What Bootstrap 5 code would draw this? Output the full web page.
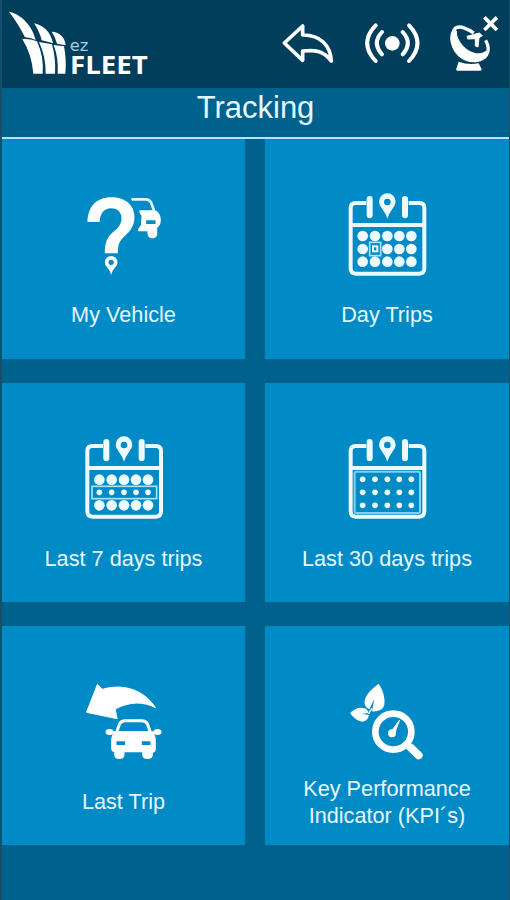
<!DOCTYPE html>
<html lang="en">
<head>
<meta charset="utf-8">
<meta name="viewport" content="width=device-width, initial-scale=1">
<title>ez FLEET - Tracking</title>
<link href="https://cdn.jsdelivr.net/npm/bootstrap@5.3.0/dist/css/bootstrap.min.css" rel="stylesheet">
<style>
body{background:#00618d;font-family:"Liberation Sans",Arial,sans-serif;color:#e6f8ff}
.screen{width:510px;height:900px;background:#00618d;border-left:2px solid #17506f;border-right:1px solid #17506f}
.topbar{height:88px;background:#003e5c;padding:0}
.title-bar{height:51px;border-bottom:2px solid #b9e3f5}
.title-bar h1{font-size:31px;line-height:40px;font-weight:400}
.tiles{display:grid;grid-template-columns:243px 244px;grid-template-rows:220px 219px 219px;column-gap:20px;row-gap:24px}
.tile{background:#008bc7;color:#e6f8ff;text-decoration:none;padding-top:46px}
.tile svg{width:100px;height:100px;flex:none}
.tile span{font-size:21.7px;line-height:27px;margin-top:16px;white-space:nowrap}
.tile .two-line{margin-top:1px}
.tile.low{padding-top:47px}
.tile.low .one-line{margin-top:15px}
.tile.last{padding-top:48px}
.tile.last .one-line{margin-top:14px}
svg{display:block}
</style>
<script src="https://cdn.jsdelivr.net/npm/bootstrap@5.3.0/dist/js/bootstrap.bundle.min.js"></script>
</head>
<body>
<main class="screen overflow-hidden">
<nav class="topbar navbar d-flex flex-nowrap justify-content-between align-items-start">
  <svg width="158" height="88" viewBox="6 0 474 264" fill="#fff" role="img" aria-label="ez FLEET">
    <path d="M27 35C62 42 97 76 107 120Q92 113 75 112Q53 68 27 35Z"/>
    <path d="M102 70C132 76 153 98 159 130Q145 126 125 121Q118 93 102 70Z"/>
    <path d="M155 95C177 96 195 110 197 136L171 131Q166 110 155 95Z"/>
    <path d="M67 117Q88 115 111 124Q132 170 128 221H100Q96 165 67 117Z"/>
    <path d="M117 126L156 133Q168 176 165 221H137Q138 170 117 126Z"/>
    <path d="M161 135L192 139Q200 180 196 221H173Q176 174 161 135Z"/>
    <text font-family="Open Sans" font-weight="700" font-size="74"><tspan x="209" y="152" font-family="DejaVu Sans" font-weight="400" font-size="46" fill="#a9cbdc" textLength="56" lengthAdjust="spacingAndGlyphs">ez</tspan><tspan x="210" y="221" textLength="233" lengthAdjust="spacingAndGlyphs">FLEET</tspan></text>
  </svg>
  <svg width="239" height="88" viewBox="0 0 717 264" fill="none" stroke="#fff" role="img" aria-label="Back, signal, satellite offline">
    <path d="M98 78V105C151 104 181 136 184 183C160 153 139 149 98 153V181L43 129Z" stroke-width="11" stroke-linejoin="round"/>
    <circle cx="367" cy="130" r="22" fill="#fff" stroke="none"/>
    <path d="M336 96Q305 129 336 163M398 96Q429 129 398 163M317 76Q266 129 317 183M417 76Q468 129 417 183" stroke-width="12" stroke-linecap="round"/>
    <path d="M553 88C534 121 555 165 590 178C614 187 640 180 650 164C658 151 655 136 647 121M553 88Q562 76 585 85Q600 90 611 99" stroke-width="10"/>
    <path d="M553 88C534 121 555 165 590 178C620 188 650 175 651 151C628 169 598 157 579 137Q558 113 561 94Z" fill="#fff" stroke="none"/>
    <path d="M591 109L628 99L637 107L627 113L624 141L616 138V116L593 117Z" fill="#fff" stroke="#fff" stroke-width="3" stroke-linejoin="round"/>
    <path d="M566 185Q594 196 626 190L635 208Q635 212 631 212H562Q557 212 559 206Z" fill="#fff" stroke="none"/>
    <path d="M643 52L681 90M681 52L643 90" stroke-width="11"/>
  </svg>
</nav>
<header class="title-bar text-center"><h1 class="m-0">Tracking</h1></header>
<svg width="0" height="0" class="position-absolute" aria-hidden="true">
  <defs>
    <g id="cal">
      <path d="M88 54H56Q41 54 41 69V250Q41 266 56 266H247Q262 266 262 250V69Q262 54 247 54H215M41 120H262" fill="none" stroke="#ecfaff" stroke-width="12"/>
      <path d="M98 42V91M204 42V91" fill="none" stroke="#ecfaff" stroke-width="18" stroke-linecap="round"/>
      <path fill-rule="evenodd" d="M151 101Q146 85 136 72Q126 61 126 50A25 25 0 0 1 176 50Q176 61 166 72Q156 85 151 101ZM151 41A10 10 0 1 0 151 61A10 10 0 1 0 151 41Z" fill="#ecfaff"/>
    </g>
    <g id="big-dots" fill="#ecfaff"><circle cx="77" cy="0" r="16"/><circle cx="114" cy="0" r="16"/><circle cx="151" cy="0" r="16"/><circle cx="187" cy="0" r="16"/><circle cx="223" cy="0" r="16"/></g>
    <g id="small-dots" fill="#ecfaff"><circle cx="77" cy="0" r="8.5"/><circle cx="114" cy="0" r="8.5"/><circle cx="151" cy="0" r="8.5"/><circle cx="187" cy="0" r="8.5"/><circle cx="223" cy="0" r="8.5"/></g>
  </defs>
</svg>
<section class="tiles">
  <a href="#" class="tile d-flex flex-column align-items-center">
    <svg viewBox="-4.5 0 300 300" fill="#fff">
      <path d="M36 111C37 65 63 37 107 37C151 37 177 61 177 97C177 122 164 139 148 153C132 167 127 178 127 205H88C87 174 96 155 113 141C130 128 138 116 138 100C138 82 126 70 107 70C86 70 74 85 72 111Z"/>
      <path fill-rule="evenodd" d="M107 269Q103 256 95 247Q88 240 88 232A19 19 0 0 1 126 232Q126 240 119 247Q111 256 107 269ZM107 224A8 8 0 1 0 107 240A8 8 0 1 0 107 224Z"/>
      <path d="M171 43H210Q222 43 227 53L235 75" fill="none" stroke="#e6f8ff" stroke-width="8" stroke-linecap="round"/>
      <path fill-rule="evenodd" d="M192 76H239Q254 82 256 103Q257 120 245 129V148Q244 160 231 160Q218 160 216 147V139H188V132L196 121L198 92L192 84ZM212 106V117H240V106Z"/>
    </svg>
    <span>My Vehicle</span>
  </a>
  <a href="#" class="tile d-flex flex-column align-items-center">
    <svg viewBox="0 0 300 300"><use href="#cal"/><use href="#big-dots" y="153"/><use href="#big-dots" y="192"/><use href="#big-dots" y="230"/>
      <rect x="98" y="172" width="33" height="40" fill="#008bc7" stroke="#a9e1f7" stroke-width="5"/><rect x="108" y="184" width="13" height="15" fill="#008bc7" stroke="#ecfaff" stroke-width="6"/>
    </svg>
    <span>Day Trips</span>
  </a>
  <a href="#" class="tile low d-flex flex-column align-items-center">
    <svg viewBox="-1 0 300 300"><g transform="translate(-2)"><use href="#cal" y="-6"/><use href="#big-dots" y="149"/><use href="#big-dots" y="226"/>
      <rect x="55" y="169" width="194" height="37" fill="#008bc7" stroke="#a9e1f7" stroke-width="5"/><use href="#small-dots" y="187"/></g>
    </svg>
    <span class="one-line">Last 7 days trips</span>
  </a>
  <a href="#" class="tile low d-flex flex-column align-items-center">
    <svg viewBox="0 0 300 300"><use href="#cal" y="-6"/>
      <rect x="53" y="125" width="196" height="124" rx="5" fill="none" stroke="#86d0ee" stroke-width="6"/>
      <use href="#small-dots" y="148"/><use href="#small-dots" y="187"/><use href="#small-dots" y="226"/>
    </svg>
    <span class="one-line">Last 30 days trips</span>
  </a>
  <a href="#" class="tile last d-flex flex-column align-items-center">
    <svg viewBox="-4.5 0 300 300" fill="#fff">
      <path d="M66 31L81 46C137 29 202 43 240 101C205 82 163 82 119 105L125 134L33 115Z" stroke="#fff" stroke-width="3" stroke-linejoin="round"/>
      <path d="M123 176L132 150Q137 140 149 140H199Q211 140 216 150L225 176" fill="none" stroke="#fff" stroke-width="9"/>
      <ellipse cx="102" cy="174" rx="12" ry="9"/><ellipse cx="246" cy="174" rx="12" ry="9"/><path d="M102 172H246V181H102Z"/>
      <path fill-rule="evenodd" d="M124 171H224Q241 180 241 198V224Q241 233 232 236V242Q231 255 216 255Q201 255 200 242V235H147V242Q146 255 131 255Q117 255 116 242V235Q107 232 107 223V198Q107 180 124 171ZM123 202V213H149V202ZM225 202V213H199V202Z"/>
    </svg>
    <span class="one-line">Last Trip</span>
  </a>
  <a href="#" class="tile last d-flex flex-column align-items-center">
    <svg viewBox="0 0 300 300" fill="#fff">
      <path d="M125 29Q146 60 142 93Q136 114 105 112L112 76L97 106Q77 97 84 74Q92 53 125 29Z"/>
      <path d="M39 117Q60 98 79 102Q91 104 95 117L75 119L96 123Q92 142 76 143Q54 140 39 117Z"/>
      <path d="M95 120Q99 110 105 103" fill="none" stroke="#fff" stroke-width="4"/>
      <circle cx="169" cy="173" r="54" fill="none" stroke="#fff" stroke-width="20"/>
      <path d="M206 211L221 226" stroke="#fff" stroke-width="15"/><path d="M221 221L245 244" stroke="#fff" stroke-width="24" stroke-linecap="round"/>
      <circle cx="165" cy="178" r="12"/><path d="M163 172L188 138L172 180Z" stroke="#fff" stroke-width="3"/>
    </svg>
    <span class="two-line text-center">Key Performance<br>Indicator (KPI´s)</span>
  </a>
</section>
</main>
</body>
</html>
